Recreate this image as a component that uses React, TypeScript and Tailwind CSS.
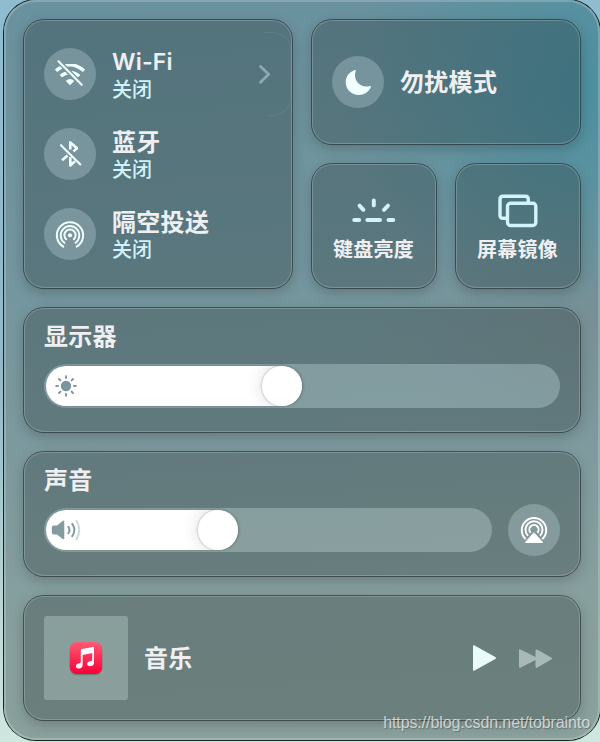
import React from "react";

const cardBase =
  "relative rounded-[20px] bg-[#0a1010]/[0.23] shadow-[0_0_0_1px_rgba(30,38,42,0.6),0_4px_14px_rgba(0,0,0,0.22),inset_0_0_0_1px_rgba(255,255,255,0.2)]";

function Card({ className = "", children }: { className?: string; children: React.ReactNode }) {
  return <section className={`${cardBase} ${className}`}>{children}</section>;
}

function IconCircle({ children }: { children: React.ReactNode }) {
  return (
    <div className="flex size-[52px] shrink-0 items-center justify-center rounded-full bg-[#dff5fa]/[0.25]">
      {children}
    </div>
  );
}

function WifiOffIcon() {
  return (
    <svg width="52" height="52" viewBox="0 0 52 52" fill="none">
      <defs>
        <mask id="wifi-cut">
          <rect width="52" height="52" fill="white" />
          <path d="M12.5 11 L39.5 39" stroke="black" strokeWidth="5" />
        </mask>
      </defs>
      <g mask="url(#wifi-cut)">
        <path d="M12 22.8 Q26 10.6 40 22.8" stroke="#f0ffff" strokeWidth="3.5" />
        <path d="M16.8 28.2 Q26 20.8 35.2 28.2" stroke="#f0ffff" strokeWidth="3.5" />
      </g>
      <path d="M21.8 33 Q26 29.2 30.2 33 L26 37.2 Z" fill="#f0ffff" />
      <path d="M14.5 13.2 L37.7 36.8" stroke="#f0ffff" strokeWidth="2.1" strokeLinecap="round" />
    </svg>
  );
}

function BluetoothOffIcon() {
  return (
    <svg width="52" height="52" viewBox="0 0 52 52" fill="none" stroke="#f0ffff" strokeWidth="2.6" strokeLinejoin="round">
      <path d="M26.3 21.5 V14.4 L33 20.2 L29.4 23.4" />
      <path d="M18 32.2 L23.6 27.4 M26.3 29 V37.4 L31 33.3" />
      <path d="M17 17.2 L36.3 36.5" strokeWidth="2.1" strokeLinecap="round" />
    </svg>
  );
}

function AirDropIcon() {
  return (
    <svg width="52" height="52" viewBox="0 0 52 52" fill="none" stroke="#f0ffff" strokeWidth="2" strokeLinecap="round">
      <path d="M19.3 38.6 A13.1 13.1 0 1 1 32.7 38.6" />
      <path d="M20.4 34.8 A9.3 9.3 0 1 1 31.6 34.8" />
      <path d="M22.2 31.3 A5.6 5.6 0 1 1 29.8 31.3" />
      <circle cx="26" cy="27.3" r="2.1" fill="#f0ffff" stroke="none" />
    </svg>
  );
}

function MoonIcon() {
  return (
    <svg width="52" height="52" viewBox="0 0 52 52">
      <path d="M22.7 14 C23.5 13.7 24 14.1 23.7 14.9 C20.4 23.6 28.2 32.5 37.5 30.2 C38.7 29.9 39.3 30.4 38.8 31.3 C36.6 36.1 32 39 26.8 39 C19.5 39 13.7 33.3 13.7 26.2 C13.7 20.8 17.3 16 22.7 14 Z" fill="#f0ffff" />
    </svg>
  );
}

function KeyboardLightIcon() {
  return (
    <svg width="44" height="26" viewBox="0 0 44 26" fill="none" stroke="#d2f3fa" strokeWidth="3.9" strokeLinecap="round">
      <path d="M2.2 22 H7.2 M15.3 22 H28 M36.5 22 H41.3" />
      <path d="M21.8 2.4 V7.4 M7.5 7.6 L11.4 11.8 M36 7.6 L32 11.8" />
    </svg>
  );
}

function MirrorIcon() {
  return (
    <svg width="40" height="34" viewBox="0 0 40 34" fill="none" stroke="#d2f3fa" strokeWidth="3.4">
      <path d="M9 24.2 H5 Q2 24.2 2 21.2 V5.5 Q2 2.3 5 2.3 H27.3 Q30.3 2.3 30.3 5.5 V9" />
      <rect x="9.5" y="9.2" width="28.3" height="22.3" rx="3" />
    </svg>
  );
}

function SunIcon() {
  return (
    <svg width="24" height="24" viewBox="0 0 24 24" stroke="#7a969c" strokeWidth="1.9" strokeLinecap="round">
      <circle cx="12" cy="12" r="5.2" fill="#7a969c" stroke="none" />
      <path d="M12 2.2V4 M12 20v1.8 M2.2 12H4 M20 12h1.8 M5 5l1.4 1.4 M17.6 17.6L19 19 M19 5l-1.4 1.4 M6.4 17.6L5 19" />
    </svg>
  );
}

function SpeakerIcon() {
  return (
    <svg width="30" height="22" viewBox="0 0 30 22" fill="none" strokeWidth="2" strokeLinecap="round">
      <path d="M2.8 6.6 H6 L11.7 1.9 Q13.3 1 13.3 2.8 V19.2 Q13.3 21 11.7 20 L6 15.5 H2.8 Q.8 15.5 .8 13.6 V8.5 Q.8 6.6 2.8 6.6Z" fill="#829b9e" />
      <path d="M17.3 7.8 Q19.7 11 17.3 14.2" stroke="#829b9e" />
      <path d="M21.2 4.8 Q25.5 11 21.2 17.2" stroke="#829b9e" />
      <path d="M25.5 1.8 Q31 11 25.5 20.2" stroke="#ccd9d9" />
    </svg>
  );
}

function AirPlayIcon() {
  return (
    <svg width="52" height="52" viewBox="0 0 52 52" fill="none" stroke="#ffffff" strokeWidth="2">
      <path d="M17.7 35.1 A12.2 12.2 0 1 1 34.3 35.1" />
      <path d="M20 31.8 A8.5 8.5 0 1 1 32 31.8" />
      <path d="M22.7 28.8 A4.6 4.6 0 1 1 29.3 28.8" />
      <path d="M26 28.8 L17.4 38.4 H34.6 Z" fill="#ffffff" stroke="#ffffff" strokeWidth="1" strokeLinejoin="round" />
    </svg>
  );
}

function Toggle({ icon, title, latin = false }: { icon: React.ReactNode; title: string; latin?: boolean }) {
  return (
    <div className="flex h-[52px] items-center gap-4">
      <IconCircle>{icon}</IconCircle>
      <div className="whitespace-nowrap pt-[3px]">
        <div className={`h-7 text-[#efeff1] ${latin ? "text-[23px] font-semibold leading-[26px] tracking-[0.2px]" : "text-[24px] font-bold leading-7 tracking-[0.3px]"}`}>
          {title}
        </div>
        <div className="h-[26px] text-[20px] font-medium leading-[26px] text-[#d0f2fb]">关闭</div>
      </div>
    </div>
  );
}

function Slider({ fill, icon, tone }: { fill: string; icon: React.ReactNode; tone: string }) {
  return (
    <div className={`h-11 min-w-0 flex-1 rounded-full p-0.5 ${tone}`}>
      <div className={`flex h-10 items-center justify-between overflow-hidden rounded-full bg-white shadow-[1px_0_3px_rgba(0,0,0,0.25)] ${fill}`}>
        {icon}
        <div className="size-10 rounded-full bg-white shadow-[0_0_0_1.5px_#dadada,0_0_18px_rgba(0,0,0,0.15)]" />
      </div>
    </div>
  );
}

export default function App() {
  return (
    <main className="relative h-[742px] w-[600px] overflow-hidden bg-[linear-gradient(180deg,#8fbdd0_0%,#91b9c6_50%,#d0e6e0_100%)] pl-1 font-['Inter','Noto_Sans_CJK_SC',sans-serif]">
      <div className="flex h-[740px] w-[596px] flex-col gap-5 rounded-[32px] bg-[radial-gradient(ellipse_260px_230px_at_100%_12%,rgba(70,143,160,0.85),transparent),radial-gradient(ellipse_220px_130px_at_100%_43%,rgba(120,139,144,0.6),transparent),linear-gradient(176deg,#69919e_0%,#73969f_35%,#7d9a9e_60%,#879f9e_80%,#8aa19c_100%)] p-5 shadow-[0_0_0_1px_#182226,inset_0_0_0_2px_rgba(255,255,255,0.2)]">
        <div className="flex h-[268px] shrink-0 gap-5">
          <Card className="flex w-[268px] flex-col gap-7 pl-5 pt-7">
            <Toggle icon={<WifiOffIcon />} title="Wi-Fi" latin />
            <Toggle icon={<BluetoothOffIcon />} title="蓝牙" />
            <Toggle icon={<AirDropIcon />} title="隔空投送" />
            <svg className="absolute right-0 top-3" width="34" height="84" viewBox="0 0 34 84" fill="none">
              <path d="M6 .5 H12 Q33 .5 33 22 V62 Q33 83.5 12 83.5 H10" stroke="#7ecbe0" strokeOpacity=".15" />
              <path d="M2.5 34.5 L10.7 42.3 L2.5 50.2" stroke="#8caab3" strokeWidth="2.7" strokeLinecap="round" strokeLinejoin="round" />
            </svg>
          </Card>
          <div className="flex w-[268px] flex-col gap-5">
            <Card className="flex h-[124px] items-center gap-4 pl-5">
              <IconCircle><MoonIcon /></IconCircle>
              <span className="pt-0.5 text-[24px] font-bold leading-7 tracking-[0.3px] text-[#efeff1]">勿扰模式</span>
            </Card>
            <div className="flex gap-5">
              <Card className="flex h-[124px] w-[124px] flex-col items-center pt-[34px]">
                <KeyboardLightIcon />
                <span className="mt-[13px] pr-px text-[20px] font-bold leading-[26px] tracking-[0.2px] text-[#efeff1]">键盘亮度</span>
              </Card>
              <Card className="flex h-[124px] w-[124px] flex-col items-center pt-[30px]">
                <MirrorIcon />
                <span className="mt-[9px] pr-px text-[20px] font-bold leading-[26px] tracking-[0.2px] text-[#efeff1]">屏幕镜像</span>
              </Card>
            </div>
          </div>
        </div>

        <Card className="h-[124px] shrink-0 px-5 pt-[15px]">
          <h2 className="h-[41px] text-[24px] font-bold leading-7 tracking-[0.3px] text-[#efeff1]">显示器</h2>
          <div className="flex">
            <Slider fill="w-[256px] pl-2" icon={<SunIcon />} tone="bg-[#d8f4f7]/[0.29]" />
          </div>
        </Card>

        <Card className="h-[124px] shrink-0 px-5 pt-[15px]">
          <h2 className="h-[37px] text-[24px] font-bold leading-7 tracking-[0.3px] text-[#efeff1]">声音</h2>
          <div className="flex items-center gap-4">
            <Slider fill="w-[192px] pl-[5px]" icon={<SpeakerIcon />} tone="bg-[#e0f5f5]/[0.29]" />
            <IconCircle><AirPlayIcon /></IconCircle>
          </div>
        </Card>

        <Card className="flex h-[124px] shrink-0 items-center pl-5 pr-7">
          <div className="flex size-[84px] items-center justify-center rounded-[3px] bg-[#e0f5f0]/[0.28]">
            <svg className="mt-0.5" width="34" height="36" viewBox="0 0 34 36">
              <defs>
                <linearGradient id="music-red" x1="0" y1="0" x2="0" y2="1">
                  <stop stopColor="#fc5b73" />
                  <stop offset="1" stopColor="#fa0037" />
                </linearGradient>
              </defs>
              <rect x=".8" y="2.2" width="32.4" height="32" rx="7" fill="#4f5d5d" opacity=".5" />
              <rect x=".8" y="1" width="32.4" height="32" rx="7" fill="url(#music-red)" />
              <path d="M11.8 9.3 Q11.8 8.2 12.9 8 L23.6 5.9 Q25 5.7 25 7 V21.5 Q25 24.5 22 25.1 C19.7 25.6 18 24.5 18.2 22.8 C18.4 20.8 20.2 20.5 22 20.1 Q23.2 19.8 23.2 18.5 V12 L13.6 13.9 V23.7 Q13.6 26.7 10.7 27.4 C8.4 28 6.7 26.8 6.9 25 C7.1 23 9 22.8 10.7 22.3 Q11.8 22 11.8 20.7 Z" fill="white" />
            </svg>
          </div>
          <span className="ml-4 pt-0.5 text-[24px] font-bold leading-7 tracking-[0.3px] text-[#efeff1]">音乐</span>
          <svg className="ml-auto" width="80" height="28" viewBox="0 0 80 28">
            <path d="M2.6 1.6 L23.3 13 Q24.8 14 23.3 15 L2.6 26.4 Q1 27.2 1 25.4 V2.6 Q1 .8 2.6 1.6Z" fill="#ebfbf8" />
            <path d="M48.5 5.5 L63.5 13 V7 Q63.5 4.7 65.4 5.7 L79.3 13.4 Q80.7 14.4 79.3 15.4 L65.4 23.5 Q63.5 24.4 63.5 22.5 V16 L48.8 23.5 Q47 24.4 47 22.5 V6.4 Q47 4.7 48.5 5.5Z" fill="#a9b9b7" />
          </svg>
        </Card>
      </div>
      <span className="absolute bottom-[10px] right-[10px] whitespace-nowrap font-['Liberation_Sans',sans-serif] text-[16px] leading-[18px] tracking-[-0.1px] text-white/65 [text-shadow:1px_1px_1px_rgba(0,0,0,0.25)]">
        https://blog.csdn.net/tobrainto
      </span>
    </main>
  );
}
